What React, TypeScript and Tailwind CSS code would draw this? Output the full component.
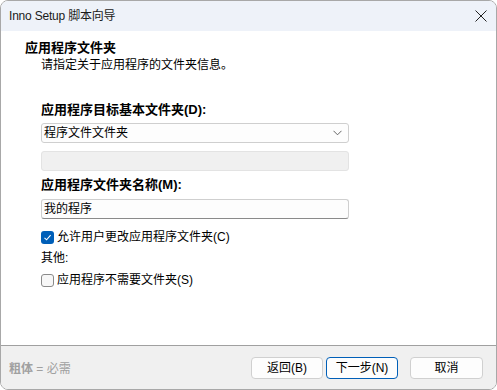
// Inno Setup wizard - application folder page

const font = { fontFamily: '"Liberation Sans", "Noto Sans CJK SC", sans-serif' };

function Checkbox({ checked }: { checked: boolean }) {
  if (checked) {
    return (
      <span className="flex h-[13px] w-[13px] items-center justify-center rounded-[3px] bg-[#005fb8]">
        <svg width="9" height="9" viewBox="0 0 9 9" fill="none">
          <path d="M1.5 4.8 L3.6 6.8 L7.6 2.2" stroke="white" strokeWidth="1.1" />
        </svg>
      </span>
    );
  }
  return <span className="h-[13px] w-[13px] rounded-[3px] border border-[#8a8a8a] bg-[#f7f7f7]" />;
}

function Button({ label, primary }: { label: string; primary?: boolean }) {
  return (
    <button
      className={`flex h-[22px] w-full items-center justify-center rounded-[4px] border bg-[#fdfdfd] text-[12px] text-black ${
        primary ? "border-[#005fb8]" : "border-[#d0d0d0]"
      }`}
    >
      {label}
    </button>
  );
}

export default function App() {
  return (
    <div
      className="flex h-[390px] w-[497px] flex-col overflow-hidden rounded-lg border border-[#a8a8a8] text-[12px] leading-[16px] text-black"
      style={font}
    >
      <div className="flex h-[30px] shrink-0 items-center justify-between bg-[#eef2f9] pl-[8px] pr-[8px]">
        <span className="text-[12px] tracking-[-0.2px] text-[#1a1a1a]">Inno Setup 脚本向导</span>
        <svg width="12" height="12" viewBox="0 0 12 12" className="mr-[1px]">
          <path d="M0.5 0.5 L11.5 11.5 M11.5 0.5 L0.5 11.5" stroke="#222" strokeWidth="1" />
        </svg>
      </div>

      <div className="flex flex-1 flex-col border-b border-[#a0a0a0] bg-white pl-[24px] pt-[9px]">
        <div className="text-[13px] font-bold">应用程序文件夹</div>
        <div className="mt-[1px] pl-[16px]">请指定关于应用程序的文件夹信息。</div>

        <div className="ml-[16px] mt-[29px] flex w-[308px] flex-col">
          <div className="text-[13px] font-bold">应用程序目标基本文件夹(D):</div>
          <div className="mt-[5px] flex h-[20px] items-center justify-between rounded-[3px] border border-[#cfcfcf] bg-[#fdfdfd] pl-[2px] pr-[6px]">
            <span>程序文件文件夹</span>
            <svg width="9" height="6" viewBox="0 0 9 6" fill="none">
              <path d="M0.5 0.8 L4.5 4.8 L8.5 0.8" stroke="#555" strokeWidth="0.9" />
            </svg>
          </div>
          <div className="mt-[8px] h-[20px] rounded-[3px] border border-[#e3e3e3] bg-[#f0f0f0]" />
          <div className="mt-[6px] text-[13px] font-bold">应用程序文件夹名称(M):</div>
          <div className="mt-[6px] flex h-[20px] items-center rounded-[3px] border border-[#cfcfcf] border-b-[#8a8a8a] bg-[#fdfdfd] pl-[2px]">
            我的程序
          </div>
          <div className="mt-[10px] flex items-center gap-[3px]">
            <Checkbox checked />
            <span>允许用户更改应用程序文件夹(C)</span>
          </div>
          <div className="mt-[5px]">其他:</div>
          <div className="mt-[6px] flex items-center gap-[3px]">
            <Checkbox checked={false} />
            <span>应用程序不需要文件夹(S)</span>
          </div>
        </div>
      </div>

      <div className="flex h-[43px] shrink-0 items-start bg-[#f0f0f0] pl-[8px] pr-[13px] pt-[11px]">
        <span className="mt-[4px] text-[#a0a0a0]">
          <span className="font-bold">粗体</span> = 必需
        </span>
        <div className="ml-auto flex">
          <div className="w-[72px]"><Button label="返回(B)" /></div>
          <div className="ml-[3px] w-[72px]"><Button label="下一步(N)" primary /></div>
          <div className="ml-[12px] w-[73px]"><Button label="取消" /></div>
        </div>
      </div>
    </div>
  );
}
